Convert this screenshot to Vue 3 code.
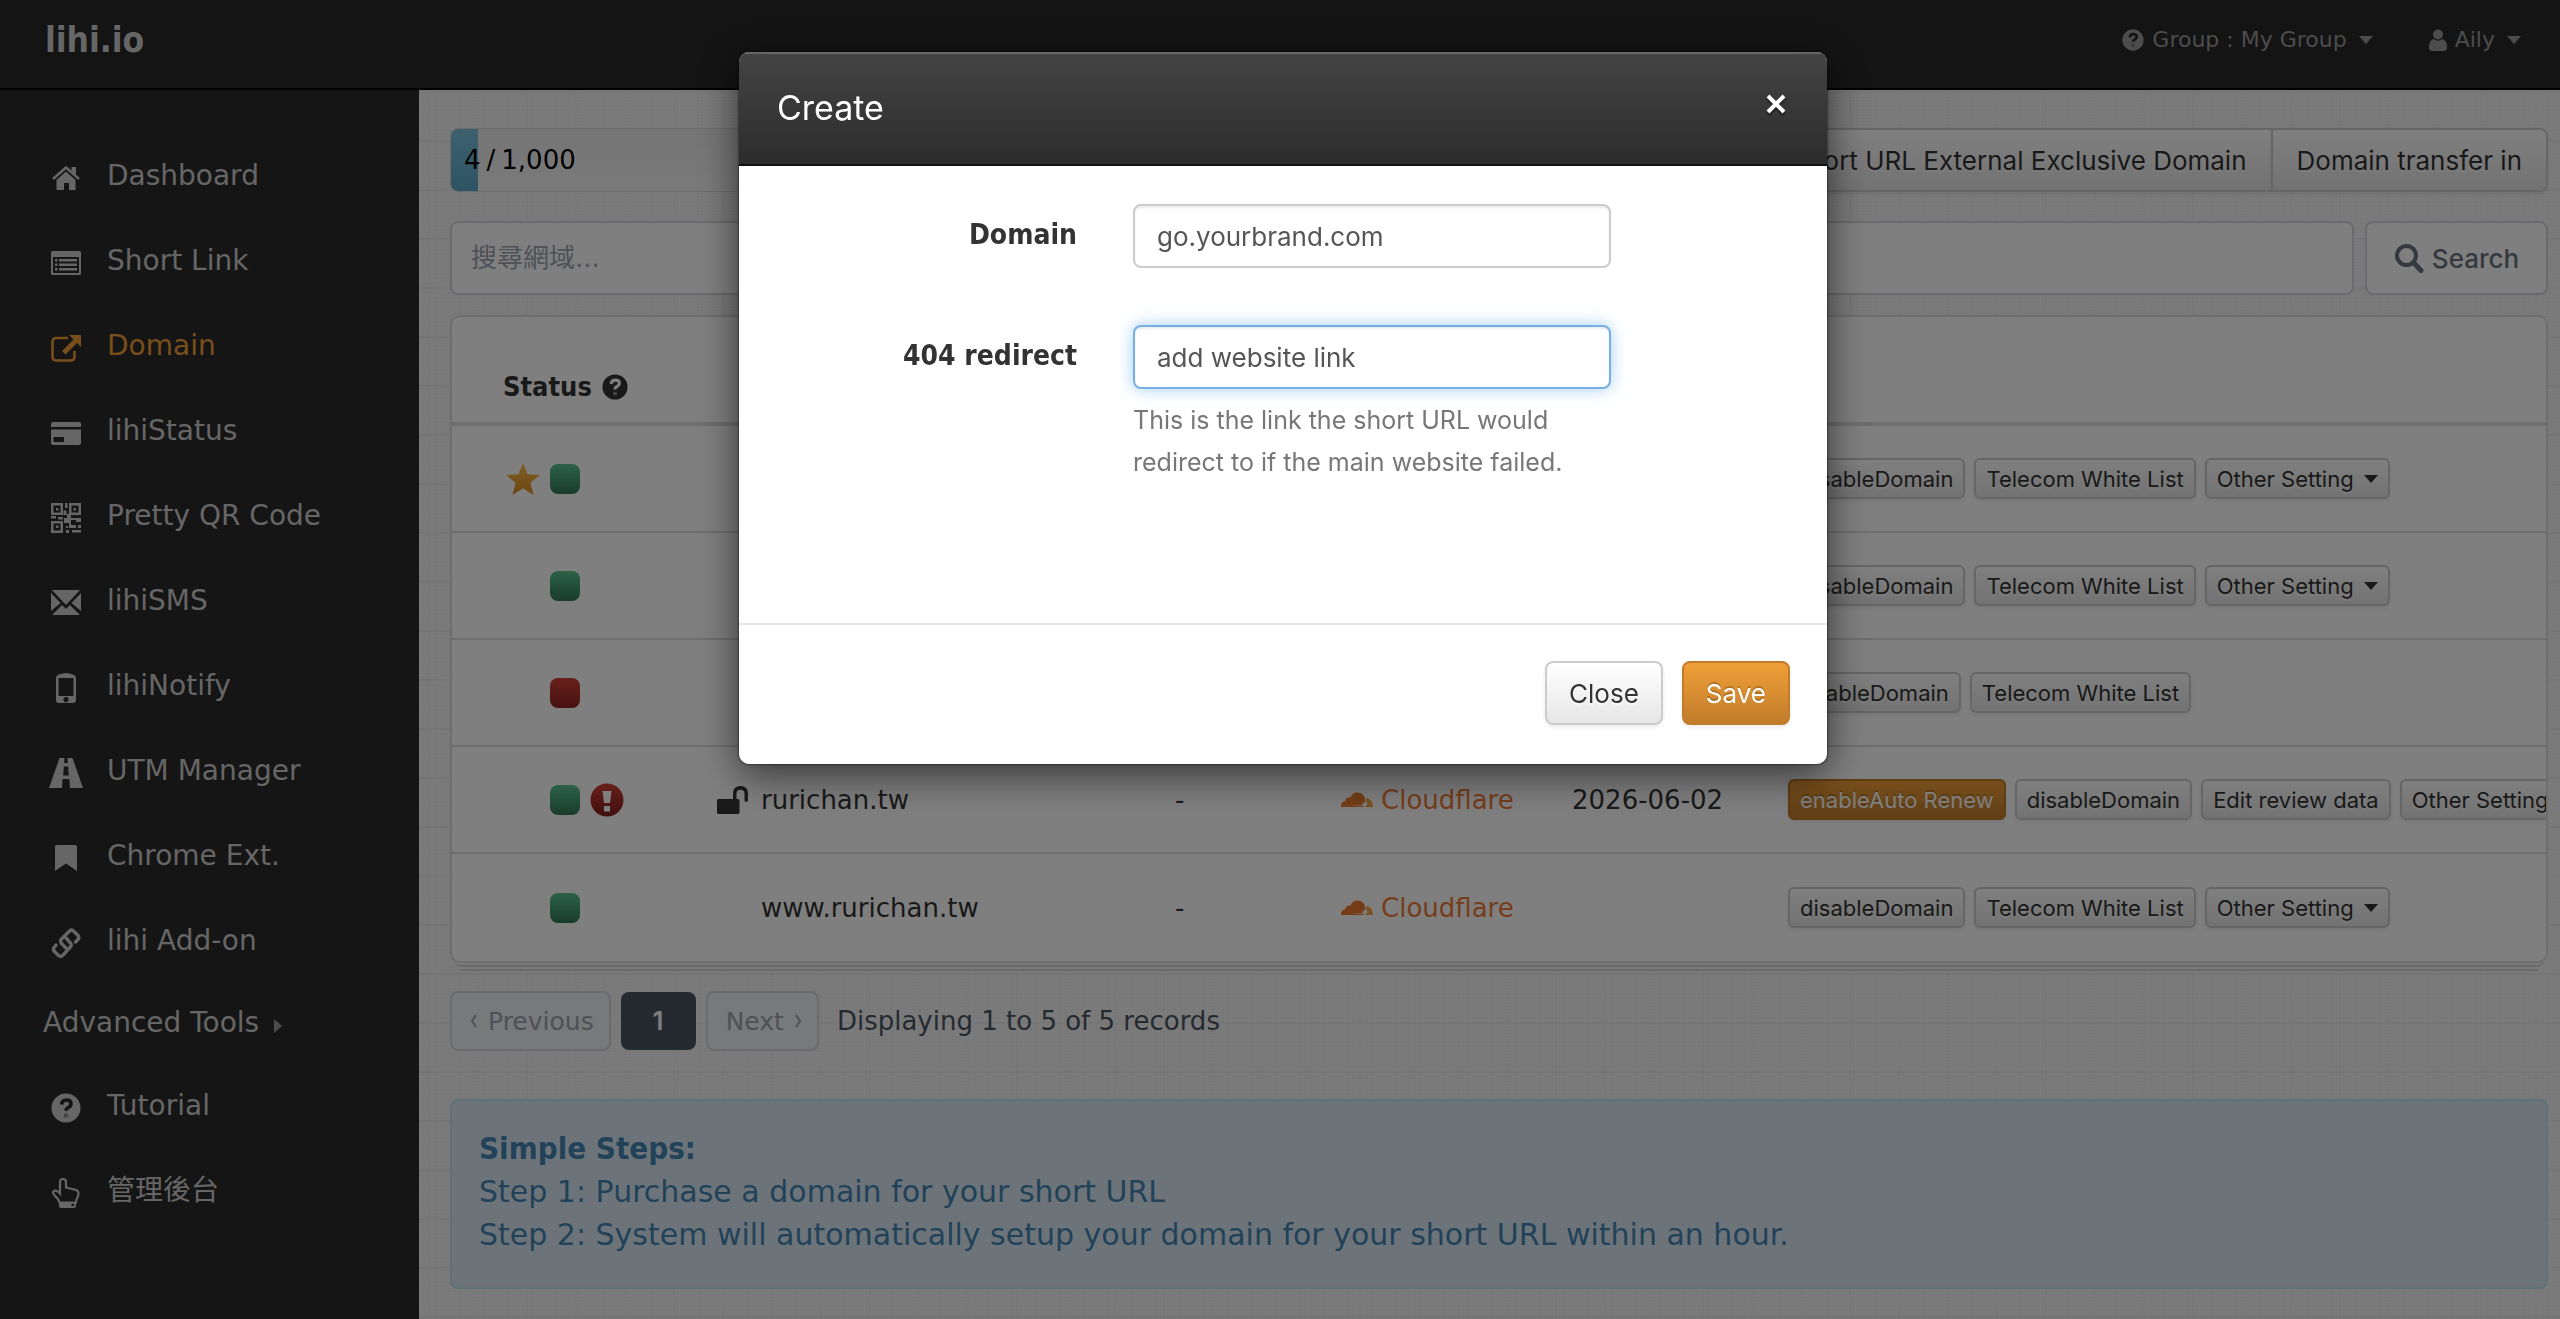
<template>
  <div class="page">
    <header class="navbar">
      <a class="brand" href="#">lihi.io</a>
      <nav class="nav-right">
        <a class="nav-item" href="#">
          <svg class="nav-icon" viewBox="0 0 30 30" v-html="icons.question"></svg>
          <span>Group : My Group</span>
          <span class="caret"></span>
        </a>
        <a class="nav-item" href="#">
          <svg class="nav-icon user" viewBox="0 0 18 22" v-html="icons.user"></svg>
          <span>Aily</span>
          <span class="caret"></span>
        </a>
      </nav>
    </header>

    <div class="layout">
      <aside class="sidebar">
        <a
          v-for="item in menu"
          :key="item.label"
          href="#"
          class="menu-item"
          :class="{ active: item.active, group: !item.icon }"
        >
          <svg v-if="item.icon" class="menu-icon" viewBox="0 0 30 30" v-html="icons[item.icon]"></svg>
          <span>{{ item.label }}</span>
          <span v-if="!item.icon" class="arrow-right"></span>
        </a>
      </aside>

      <main class="content">
        <div class="toolbar">
          <div class="progress">
            <div class="progress-bar" :style="{ width: used + '%' }"></div>
            <div class="progress-text"><span>4</span><span>/</span><span>1,000</span></div>
          </div>
          <div class="btn-group">
            <button class="btn">Short URL External Exclusive Domain</button>
            <button class="btn">Domain transfer in</button>
          </div>
        </div>

        <form class="search" @submit.prevent>
          <input v-model="keyword" class="search-input" type="text" placeholder="搜尋網域..." aria-label="搜尋網域" />
          <button class="search-btn" type="submit">
            <svg class="search-icon" viewBox="0 0 30 30" v-html="icons.search"></svg>
            <span>Search</span>
          </button>
        </form>

        <div class="table-wrap">
          <table class="domains">
            <colgroup>
              <col class="c-status" />
              <col class="c-domain" />
              <col class="c-note" />
              <col class="c-dns" />
              <col class="c-date" />
              <col />
            </colgroup>
            <thead>
              <tr>
                <th scope="col">
                  <div class="th-status">
                    Status
                    <svg class="help-icon" viewBox="0 0 30 30" v-html="icons.question"></svg>
                  </div>
                </th>
                <td colspan="5"></td>
              </tr>
            </thead>
            <tbody>
              <tr v-for="(row, idx) in rows" :key="idx">
                <td>
                  <div class="status-cell">
                    <span class="star-slot">
                      <svg v-if="row.star" class="star" viewBox="0 0 34 32" v-html="icons.star"></svg>
                    </span>
                    <span class="badge" :class="row.status"></span>
                    <svg v-if="row.alert" class="alert-icon" viewBox="0 0 34 34" v-html="icons.alert"></svg>
                  </div>
                </td>
                <td>
                  <div class="domain-cell">
                    <span class="lock-slot">
                      <svg v-if="row.unlocked" class="lock" viewBox="0 0 32 28" v-html="icons.unlock"></svg>
                    </span>
                    {{ row.domain }}
                  </div>
                </td>
                <td>{{ row.note }}</td>
                <td>
                  <div v-if="row.dns" class="dns">
                    <svg class="cloud" viewBox="0 0 32 16" v-html="icons.cloud"></svg>
                    {{ row.dns }}
                  </div>
                </td>
                <td>{{ row.date }}</td>
                <td>
                  <div class="actions">
                    <button
                      v-for="action in row.actions"
                      :key="action"
                      class="btn btn-small"
                      :class="{ 'btn-primary': action === 'enableAuto Renew' }"
                    >
                      {{ action }}
                      <span v-if="action === 'Other Setting'" class="caret"></span>
                    </button>
                  </div>
                </td>
              </tr>
            </tbody>
          </table>
        </div>

        <div class="pager">
          <button class="page-btn" disabled>
            <svg class="chevron" viewBox="0 0 8 14"><path d="M6 1 2 7l4 6" /></svg>
            Previous
          </button>
          <button class="page-btn current">1</button>
          <button class="page-btn" disabled>
            Next
            <svg class="chevron" viewBox="0 0 8 14"><path d="m2 1 4 6-4 6" /></svg>
          </button>
          <span class="page-info">Displaying 1 to 5 of 5 records</span>
        </div>

        <div class="steps">
          <strong>Simple Steps:</strong>
          <span>Step 1: Purchase a domain for your short URL</span>
          <span>Step 2: System will automatically setup your domain for your short URL within an hour.</span>
        </div>
      </main>
    </div>

    <div v-if="showModal" class="backdrop">
      <form class="modal" role="dialog" aria-labelledby="modal-title" @submit.prevent>
        <div class="modal-header">
          <h3 id="modal-title">Create</h3>
          <button class="close" type="button" aria-label="Close dialog" @click="showModal = false">
            <svg viewBox="0 0 22 22"><path d="M3 3 19 19M19 3 3 19" /></svg>
          </button>
        </div>
        <div class="modal-body">
          <div class="field">
            <label for="domain">Domain</label>
            <input id="domain" v-model="form.domain" type="text" />
          </div>
          <div class="field">
            <label for="redirect">404 redirect</label>
            <div class="control">
              <input id="redirect" v-model="form.redirect" class="focused" type="text" />
              <p class="help">This is the link the short URL would redirect to if the main website failed.</p>
            </div>
          </div>
        </div>
        <div class="modal-footer">
          <button class="btn" type="button" @click="showModal = false">Close</button>
          <button class="btn btn-primary" type="submit">Save</button>
        </div>
      </form>
    </div>
  </div>
</template>

<script setup>
import { ref, reactive } from 'vue'

const showModal = ref(true)
const keyword = ref('')
const used = ref(9)
const form = reactive({
  domain: 'go.yourbrand.com',
  redirect: 'add website link'
})

const menu = [
  { label: 'Dashboard', icon: 'home' },
  { label: 'Short Link', icon: 'list' },
  { label: 'Domain', icon: 'external', active: true },
  { label: 'lihiStatus', icon: 'card' },
  { label: 'Pretty QR Code', icon: 'qr' },
  { label: 'lihiSMS', icon: 'mail' },
  { label: 'lihiNotify', icon: 'phone' },
  { label: 'UTM Manager', icon: 'road' },
  { label: 'Chrome Ext.', icon: 'bookmark' },
  { label: 'lihi Add-on', icon: 'link' },
  { label: 'Advanced Tools' },
  { label: 'Tutorial', icon: 'question' },
  { label: '管理後台', icon: 'hand' }
]

const defaultActions = ['disableDomain', 'Telecom White List', 'Other Setting']

const rows = [
  { star: true, status: 'green', actions: defaultActions },
  { status: 'green', actions: defaultActions },
  { status: 'red', actions: ['enableDomain', 'Telecom White List'] },
  {
    status: 'green',
    alert: true,
    unlocked: true,
    domain: 'rurichan.tw',
    note: '-',
    dns: 'Cloudflare',
    date: '2026-06-02',
    actions: ['enableAuto Renew', 'disableDomain', 'Edit review data', 'Other Setting']
  },
  { status: 'green', domain: 'www.rurichan.tw', note: '-', dns: 'Cloudflare', actions: defaultActions }
]

const icons = {
  home: '<path d="M2 16 15 4.500 28 16" fill="none" stroke="currentColor" stroke-width="2.600"/><path d="M20.500 4h4.500v8l-4.500-4z"/><path d="M5.500 17 15 8.500l9.500 8.500v10H18v-7h-5v7H5.500z"/>',
  list: '<path fill-rule="evenodd" d="M1.500 3h27a1.500 1.500 0 0 1 1.500 1.500v21a1.500 1.500 0 0 1-1.500 1.500h-27a1.500 1.500 0 0 1-1.500-1.500v-21a1.500 1.500 0 0 1 1.500-1.500zM2 9v16h26V9z"/><path d="M4 11h2.500v2.500H4zM8 11h18v2.500H8zM4 15.500h2.500v2.500H4zM8 15.500h18v2.500H8zM4 20h2.500v2.500H4zM8 20h18v2.500H8z"/>',
  external: '<path d="M17 5H5.500Q1.500 5 1.500 9v14.500q0 4 4 4h14q4 0 4-4V18" fill="none" stroke="currentColor" stroke-width="2.600"/><path d="M18 2h12v12l-4-4-11.500 11.500-3.500-3.500L22.500 6.500z"/>',
  card: '<path fill-rule="evenodd" d="M2 4h26a2 2 0 0 1 2 2v3H0V6a2 2 0 0 1 2-2zM0 11.500h30V25a2 2 0 0 1-2 2H2a2 2 0 0 1-2-2zM2.500 19v5H13v-5z"/>',
  qr: '<path fill-rule="evenodd" d="M0 0h12v12H0zM2.500 2.500v7h7v-7zM18 0h12v12H18zM20.500 2.500v7h7v-7zM0 18h12v12H0zM2.500 20.500v7h7v-7z"/><path d="M5 5h2.500v2.500H5zM22.500 5H25v2.500h-2.500zM5 22.500h2.500V25H5zM14 0h2.500v5H14zM12.500 7.500h3V11H20v4h10v4h-5v-2h-5v5h5v3h-7v-5h-5v-5h3v-3h-3.500zM0 13h5v2.500H0zM7 14h5v2.500H7zM15 27h3v3h-3zM15 23h2v2h-2zM21 27h9v2.500h-9zM27 22h3v3h-3z"/>',
  mail: '<path d="M1 2h28L15 17zM0 5l9.500 10L0 23zM30 5v18l-9.500-8zM1 27l10-10 4 4 4-4 10 10z"/>',
  phone: '<path fill-rule="evenodd" d="M8 1.500Q15-1.500 22 1.500q3 1 3 3V27a3 3 0 0 1-3 3H8a3 3 0 0 1-3-3V4.500q0-2 3-3zM7.500 5v18h15V5zM15 24a2.600 2.600 0 1 0 .01 0z"/>',
  road: '<path fill-rule="evenodd" d="M8.500 0h5l-.3 5h3.600l-.3-5h5L32 30H19l-.6-9h-6.800l-.6 9H-2zM12.900 8.500l-.7 9h5.600l-.7-9z"/>',
  bookmark: '<path d="M5.500 2h19Q26 2 26 3.500V28L15 20.500 4 28V3.500Q4 2 5.500 2z"/>',
  link: '<g fill="none" stroke="currentColor" stroke-width="3.400" stroke-linecap="round"><path d="m15 20-5-5q-1-2 0-3.500L18 3.500q2-2.500 4.500-.5l3.500 3.500q3 2.500 1 5l-2.500 2.500"/><path d="m15 10 4.500 5q1.500 2 0 4L12 27q-2 2.500-4.500.5L4 24q-3-2.500-.5-5L5 17"/></g>',
  question: '<mask id="q-mark"><path fill="#fff" d="M0 0h30v30H0z"/><path d="M10.500 11.500q.5-4.500 5-4.500t4.500 3.500q0 2.500-2.500 3.800Q15 15.500 15 17.800" fill="none" stroke="#000" stroke-width="3.600"/><path d="M13 20.500h4.200v4H13z"/></mask><circle cx="15" cy="15" r="14.500" mask="url(#q-mark)"/>',
  hand: '<path d="M8.500 24.500c-.5-5-6-6-6.500-10 .5-3 4-2.500 7 1V4q0-3 3-3t3 3v5.500l10 2.500q2.500 1 2.500 3.500c0 4-2.500 5-2.500 9z" fill="none" stroke="currentColor" stroke-width="2.200"/><path fill-rule="evenodd" d="M8 24h17v4q0 2-2 2H10q-2 0-2-2zM20.500 25.500v2.500H23v-2.500z"/>',
  user: '<circle cx="9" cy="5.500" r="5"/><path d="M4.500 10q4.500 3.500 9 0Q18 11.500 18 18q0 4-3 4H3q-3 0-3-4 0-6.500 4.500-8z"/>',
  search: '<circle cx="12.500" cy="12.500" r="9.500" fill="none" stroke="currentColor" stroke-width="4"/><path d="m19.500 19.500 7.500 8" stroke="currentColor" stroke-width="5" stroke-linecap="round"/>',
  star: '<linearGradient id="star-fill" x2="0" y2="1"><stop stop-color="#ffc04c"/><stop offset="1" stop-color="#d98c22"/></linearGradient><path fill="url(#star-fill)" d="m17 0 4.500 11.200L34 12l-9.500 7.800L27.500 32 17 25.300 6.500 32l3-12.200L0 12l12.500-.8z"/>',
  alert: '<linearGradient id="alert-fill" x2="0" y2="1"><stop stop-color="#cf3d34"/><stop offset="1" stop-color="#82201c"/></linearGradient><circle cx="17" cy="17" r="16.500" fill="url(#alert-fill)"/><path fill="#fff" d="M12.500 8h9l-1.500 12h-6zM14 23h6v5.500h-6z"/>',
  unlock: '<path d="M1.500 13H16V7.500Q16 0 23.500 0T31 7.500V14q0 2-1.800 2T27.500 14V7.500q0-3.700-4-3.700t-4 3.700V13H21q1.500 0 1.500 1.500v12Q22.500 28 21 28H1.500Q0 28 0 26.500v-12Q0 13 1.500 13z"/>',
  cloud: '<path fill="#e87a2e" d="M0 15q-.5-5 4.500-6 0-4 4-3.500h1Q11.500.5 16.500.500q6 0 7.500 6 1.500 3.500.5 5.500-.5 1-2 1H9.500l12.500.7L23.500 15z"/><path fill="#f0a440" d="M25 6q6.500.5 7 9H24q1.500-3 1.700-5z"/><path fill="#fff" d="m24 8 1 3 2.500 1-2.500 1-1 3-1-3-2.500-1 2.500-1z"/>'
}
</script>

<style>
body {
  margin: 0;
  background: #2a2a2a;
}
</style>

<style scoped>
.page {
  min-height: 100vh;
  display: flex;
  flex-direction: column;
  font-family: "DejaVu Sans", "Noto Sans CJK TC", sans-serif;
  font-size: 26px;
  line-height: 40px;
  color: #333;
}

.page,
.page *,
.page *::before {
  box-sizing: border-box;
}

a {
  color: inherit;
  text-decoration: none;
}

button,
input {
  margin: 0;
  font-family: inherit;
}

svg {
  display: block;
  flex: none;
  fill: currentColor;
}

/* top bar */
.navbar {
  height: 90px;
  display: flex;
  justify-content: space-between;
  align-items: flex-start;
  padding: 20px 39px 0 45px;
  background: #282828;
  border-bottom: 2px solid #000;
}

.brand {
  font-family: "DejaVu Sans Condensed", "DejaVu Sans", sans-serif;
  font-size: 35px;
  font-weight: bold;
  color: #ccc;
}

.nav-right {
  display: flex;
  gap: 56px;
  font-size: 22px;
  color: #999;
}

.nav-item {
  display: flex;
  align-items: center;
  gap: 8px;
}

.nav-icon {
  width: 22px;
  height: 22px;
}

.nav-icon.user {
  width: 18px;
}

.caret {
  border: 7px solid transparent;
  border-top: 8px solid currentColor;
  border-bottom: 0;
  margin-left: 4px;
}

/* sidebar */
.layout {
  flex: 1;
  display: flex;
}

.sidebar {
  flex: none;
  width: 419px;
  padding-top: 43px;
  background: #2a2a2a;
  color: #ccc;
  font-size: 28px;
}

.menu-item {
  height: 85px;
  display: flex;
  align-items: center;
  gap: 26px;
  padding-left: 51px;
}

.menu-item.active {
  color: #f09f38;
}

.menu-item.group {
  height: 80px;
  gap: 15px;
  padding-left: 43px;
}

.menu-icon {
  width: 30px;
  height: 30px;
  margin-top: 5px;
  overflow: visible;
}

.arrow-right {
  border: 7px solid transparent;
  border-left: 8px solid #999;
  border-right: 0;
  margin-top: 6px;
}

/* content, on a faint graph paper */
.content {
  flex: 1;
  min-width: 0;
  padding: 38px 12px 30px 31px;
  background-color: #f7f7f7;
  background-image:
    linear-gradient(90deg, rgba(0, 0, 0, 0.02) 2px, transparent 2px),
    linear-gradient(rgba(0, 0, 0, 0.03) 2px, transparent 2px),
    linear-gradient(90deg, rgba(0, 0, 0, 0.015) 1px, transparent 1px),
    linear-gradient(rgba(0, 0, 0, 0.015) 1px, transparent 1px);
  background-size: 49px 49px, 49px 49px, 3px 3px, 3px 3px;
  background-position: 9px 1px;
}

.toolbar {
  height: 64px;
  display: flex;
  gap: 20px;
}

.progress {
  position: relative;
  width: 300px;
  border: 1px solid #d8d8d8;
  border-radius: 8px;
  background: linear-gradient(#eaeaea, #f5f5f5);
  overflow: hidden;
}

.progress-bar {
  height: 100%;
  background: linear-gradient(#7cc1dd, #5ba8c8);
}

.progress-text {
  position: absolute;
  inset: 0;
  display: flex;
  align-items: center;
  gap: 6px;
  padding-left: 13px;
  color: #000;
}

.btn {
  height: 64px;
  padding: 0 22px;
  border: 2px solid #ccc;
  border-radius: 8px;
  background: linear-gradient(#fff, #e6e6e6);
  box-shadow: 0 2px 4px rgba(0, 0, 0, 0.08);
  color: #333;
  font-family: Inter, "Liberation Sans", sans-serif;
  font-size: 26px;
  text-shadow: 0 2px 2px rgba(255, 255, 255, 0.75);
  white-space: nowrap;
}

.btn-primary {
  border-color: #c17c2a;
  background: linear-gradient(#f09f38, #c17c2a);
  color: #fff;
  text-shadow: 0 -2px 0 rgba(0, 0, 0, 0.2);
}

.btn-group {
  display: flex;
  margin-left: auto;
}

.btn-group .btn {
  padding: 0 24px;
}

.btn-group .btn:first-child {
  border-right: 0;
  border-radius: 8px 0 0 8px;
}

.btn-group .btn:last-child {
  border-radius: 0 8px 8px 0;
}

/* search */
.search {
  display: flex;
  gap: 11px;
  margin: 29px 0 20px;
}

.search-input {
  flex: 1;
  min-width: 0;
  height: 74px;
  padding: 0 19px;
  border: 2px solid #d5d6dc;
  border-radius: 8px;
  background: #fff;
  font-size: 26px;
  color: #555;
}

.search-input::placeholder {
  color: #9ca3af;
  opacity: 1;
}

.search-btn {
  width: 183px;
  display: flex;
  align-items: center;
  justify-content: center;
  gap: 8px;
  border: 2px solid #d5d6dc;
  border-radius: 8px;
  background: #fff;
  color: #6b7280;
  font-family: Inter, "Liberation Sans", sans-serif;
  font-size: 26px;
  font-weight: 500;
}

.search-icon {
  width: 30px;
  height: 30px;
}

/* domain table */
.table-wrap {
  border: 2px solid #ddd;
  border-radius: 10px;
  background: #fff;
  overflow: hidden;
  box-shadow:
    0 7px 0 -5px #f6f6f6,
    0 9px 0 -5px #d4d4d4,
    0 16px 0 -10px #f6f6f6,
    0 18px 0 -10px #d4d4d4;
}

.domains {
  width: 100%;
  table-layout: fixed;
  border-collapse: separate;
  border-spacing: 0;
}

.c-status {
  width: 265px;
}

.c-domain {
  width: 458px;
}

.c-note {
  width: 166px;
}

.c-dns {
  width: 231px;
}

.c-date {
  width: 216px;
}

.domains th,
.domains td {
  height: 107px;
  padding: 0;
  text-align: left;
  border-bottom: 2px solid #ddd;
}

.domains thead th,
.domains thead td {
  height: 109px;
  border-bottom-width: 4px;
}

.domains tbody tr:last-child td {
  border-bottom: 0;
}

.th-status {
  display: flex;
  align-items: center;
  gap: 10px;
  padding: 35px 0 0 51px;
  font-family: "DejaVu Sans Condensed", "DejaVu Sans", sans-serif;
  font-size: 27px;
  line-height: 34px;
}

.help-icon {
  width: 26px;
  height: 26px;
}

.status-cell {
  display: flex;
  align-items: center;
  gap: 10px;
  padding-left: 54px;
}

.star-slot {
  width: 34px;
}

.star {
  width: 34px;
  height: 32px;
}

.badge {
  width: 30px;
  height: 30px;
  border-radius: 8px;
}

.badge.green {
  background: linear-gradient(#58c48e, #347856);
}

.badge.red {
  background: linear-gradient(#d24036, #8c2622);
}

.alert-icon {
  width: 34px;
  height: 34px;
}

.domain-cell,
.dns,
.actions {
  display: flex;
  align-items: center;
}

.lock-slot {
  width: 44px;
}

.lock {
  width: 32px;
  height: 28px;
}

.dns {
  gap: 8px;
  color: #ec7a38;
}

.cloud {
  width: 32px;
  height: 16px;
}

.actions {
  gap: 9px;
}

.btn-small {
  flex: none;
  display: flex;
  align-items: center;
  gap: 6px;
  height: 41px;
  padding: 0 10px;
  border-radius: 6px;
  font-size: 22px;
}

/* pager */
.pager {
  display: flex;
  align-items: center;
  gap: 10px;
  margin: 28px 0 48px;
  color: #4b5563;
}

.page-btn {
  height: 60px;
  display: flex;
  align-items: center;
  gap: 10px;
  padding: 0 15px 0 18px;
  border: 2px solid #d5d6dc;
  border-radius: 8px;
  background: #f1f2f4;
  color: #9ca3af;
  font-size: 25px;
}

.page-btn.current {
  width: 75px;
  height: 58px;
  justify-content: center;
  padding: 0;
  border: 0;
  background: #4b5563;
  color: #fff;
  font-family: Inter, "Liberation Sans", sans-serif;
  font-weight: 600;
}

.chevron {
  width: 8px;
  height: 14px;
  fill: none;
  stroke: currentColor;
  stroke-width: 2;
}

.page-info {
  margin-left: 8px;
}

/* info box */
.steps {
  display: flex;
  flex-direction: column;
  padding: 26px 27px 31px;
  border: 2px solid #bce3ee;
  border-radius: 8px;
  background: #d9e9f3;
  color: #4585b2;
  font-size: 30px;
  line-height: 43px;
}

.steps strong {
  font-family: "DejaVu Sans Condensed", "DejaVu Sans", sans-serif;
  font-size: 31px;
}

/* modal */
.backdrop {
  position: fixed;
  inset: 0;
  display: flex;
  justify-content: center;
  align-items: flex-start;
  padding: 52px 0 0 6px;
  background: rgba(0, 0, 0, 0.5);
}

.modal {
  width: 1088px;
  border-radius: 10px;
  background: #fff;
  box-shadow: 0 10px 40px rgba(0, 0, 0, 0.6), 0 0 2px 1px rgba(0, 0, 0, 0.4);
  overflow: hidden;
}

.modal-header {
  height: 114px;
  display: flex;
  justify-content: space-between;
  align-items: center;
  padding: 0 40px 0 38px;
  border-bottom: 2px solid #111;
  background: linear-gradient(#444, #2c2c2c);
  box-shadow: inset 0 2px 0 #666;
  color: #fff;
}

.modal-header h3 {
  margin: 0;
  font-family: Inter, "Liberation Sans", sans-serif;
  font-size: 34px;
  font-weight: 400;
}

.close {
  padding: 0 0 8px;
  border: 0;
  background: none;
  color: #fff;
}

.close svg {
  width: 22px;
  height: 22px;
  stroke: currentColor;
  stroke-width: 4;
  filter: drop-shadow(0 2px 1px rgba(0, 0, 0, 0.6));
}

.modal-body {
  min-height: 457px;
  display: flex;
  flex-direction: column;
  gap: 57px;
  padding-top: 38px;
}

.field {
  display: flex;
  align-items: flex-start;
  gap: 56px;
}

.field label {
  width: 338px;
  text-align: right;
  font-family: "DejaVu Sans Condensed", "DejaVu Sans", sans-serif;
  font-size: 28px;
  font-weight: bold;
  line-height: 62px;
}

.field input {
  display: block;
  width: 478px;
  height: 64px;
  padding: 0 22px;
  border: 2px solid #ccc;
  border-radius: 8px;
  box-shadow: inset 0 2px 2px rgba(0, 0, 0, 0.08);
  background: #fff;
  color: #555;
  font-family: Inter, "Liberation Sans", sans-serif;
  font-size: 26px;
}

.field input.focused {
  border-color: #76aee8;
  box-shadow: inset 0 2px 2px rgba(0, 0, 0, 0.08), 0 0 16px rgba(102, 175, 233, 0.6);
}

.control {
  width: 478px;
}

.help {
  margin: 10px 0 0;
  color: #777;
  font-family: Inter, "Liberation Sans", sans-serif;
  font-size: 25px;
  line-height: 42px;
}

.modal-footer {
  display: flex;
  justify-content: flex-end;
  gap: 19px;
  padding: 36px 37px 39px;
  border-top: 2px solid #e5e5e5;
}
</style>
